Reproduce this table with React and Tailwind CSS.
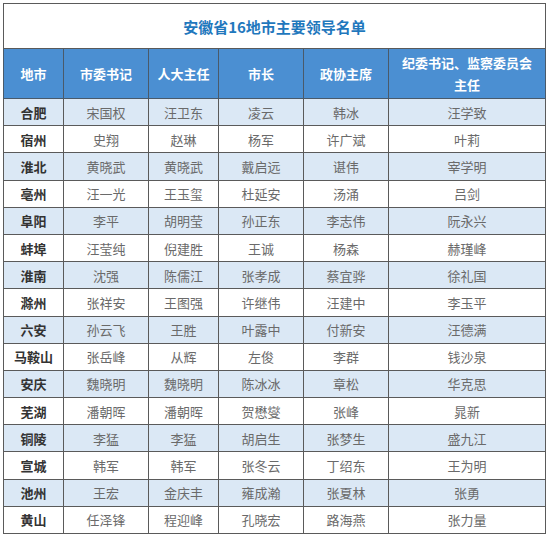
const HEADERS = ['地市', '市委书记', '人大主任', '市长', '政协主席', '纪委书记、监察委员会主任'];

const ROWS = [
  ['合肥', '宋国权', '汪卫东', '凌云', '韩冰', '汪学致'],
  ['宿州', '史翔', '赵琳', '杨军', '许广斌', '叶莉'],
  ['淮北', '黄晓武', '黄晓武', '戴启远', '谌伟', '宰学明'],
  ['亳州', '汪一光', '王玉玺', '杜延安', '汤涌', '吕剑'],
  ['阜阳', '李平', '胡明莹', '孙正东', '李志伟', '阮永兴'],
  ['蚌埠', '汪莹纯', '倪建胜', '王诚', '杨森', '赫瑾峰'],
  ['淮南', '沈强', '陈儒江', '张孝成', '蔡宜骅', '徐礼国'],
  ['滁州', '张祥安', '王图强', '许继伟', '汪建中', '李玉平'],
  ['六安', '孙云飞', '王胜', '叶露中', '付新安', '汪德满'],
  ['马鞍山', '张岳峰', '从辉', '左俊', '李群', '钱沙泉'],
  ['安庆', '魏晓明', '魏晓明', '陈冰冰', '章松', '华克思'],
  ['芜湖', '潘朝晖', '潘朝晖', '贺懋燮', '张峰', '晁新'],
  ['铜陵', '李猛', '李猛', '胡启生', '张梦生', '盛九江'],
  ['宣城', '韩军', '韩军', '张冬云', '丁绍东', '王为明'],
  ['池州', '王宏', '金庆丰', '雍成瀚', '张夏林', '张勇'],
  ['黄山', '任泽锋', '程迎峰', '孔晓宏', '路海燕', '张力量'],
];

const COL_WIDTHS = ['w-[60px]', 'w-[85px]', 'w-[70px]', 'w-[85px]', 'w-[85px]', 'w-[157px]'];

export default function App() {
  return (
    <div className="w-[550px] h-[539px] bg-white pt-[3px] pl-[3px] font-['Noto_Sans_CJK_SC',sans-serif]">
      <table className="table-fixed border-collapse w-[542px]">
        <colgroup>
          {COL_WIDTHS.map((w, i) => (
            <col key={i} className={w} />
          ))}
        </colgroup>
        <thead>
          <tr className="h-[45px]">
            <th colSpan={6} className="border border-[#5a5a5a] bg-white text-[15px] font-bold text-[#1f78bd] text-center pt-[2px]">
              安徽省16地市主要领导名单
            </th>
          </tr>
          <tr className="h-[50px] bg-[#4b8fd2]">
            {HEADERS.map((h, i) => (
              <th
                key={h}
                className={`border border-[#4a5a6a] text-white text-[13px] font-bold text-center leading-[22px] ${i === 5 ? 'px-3' : 'px-1'}`}
              >
                {h}
              </th>
            ))}
          </tr>
        </thead>
        <tbody>
          {ROWS.map((row, r) => (
            <tr key={row[0]} className={`h-[27.2px] ${r % 2 === 0 ? 'bg-[#dbe8f5]' : 'bg-white'}`}>
              {row.map((cell, c) => (
                <td
                  key={c}
                  className={`border border-[#5a5a5a] text-center text-[13px] leading-none p-0 ${
                    c === 0 ? 'font-bold text-[#333]' : 'text-[#6a6a6a]'
                  }`}
                >
                  {cell}
                </td>
              ))}
            </tr>
          ))}
        </tbody>
      </table>
    </div>
  );
}
